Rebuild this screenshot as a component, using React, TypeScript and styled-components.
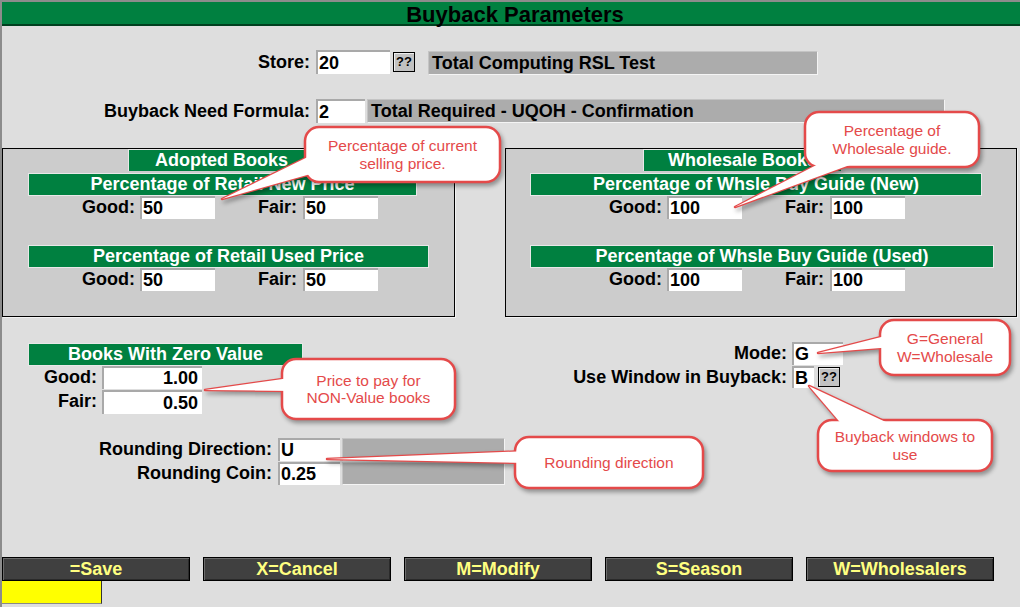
import styled, { createGlobalStyle } from "styled-components";

const FONT = `"Liberation Sans", Arial, sans-serif`;
const GREEN = "#008040";
const RED = "#e44a4a";

const GlobalStyle = createGlobalStyle`
  * { box-sizing: border-box; }
  body {
    margin: 0;
    background: #dedede;
    font-family: ${FONT};
  }
`;

const Window = styled.div`
  position: relative;
  width: 1020px;
  height: 607px;
  display: flex;
  flex-direction: column;
  background: #dedede;
  border-left: 2px solid #8c8c8c;
  border-top: 2px solid #8c8c8c;
  overflow: hidden;
`;

const TitleBar = styled.div`
  height: 24px;
  background: ${GREEN};
  border-bottom: 2px solid #00401f;
  color: #000;
  font: bold 22px/26px ${FONT};
  text-align: center;
  padding-left: 8px;
`;

const FieldRow = styled.div<{ $mt: number }>`
  display: flex;
  align-items: flex-start;
  margin-top: ${(p) => p.$mt}px;
`;

const Label = styled.div<{ $w: number; $lh?: number }>`
  width: ${(p) => p.$w}px;
  flex: none;
  text-align: right;
  font: bold 18px/${(p) => p.$lh ?? 23}px ${FONT};
  color: #000;
  white-space: nowrap;
`;

const Field = styled.div<{ $w: number; $h?: number; $ml?: number; $right?: boolean }>`
  width: ${(p) => p.$w}px;
  height: ${(p) => p.$h ?? 23}px;
  margin-left: ${(p) => p.$ml ?? 5}px;
  flex: none;
  background: #fff;
  border-top: 2px solid #a9a9a9;
  border-left: 2px solid #a9a9a9;
  padding: 0 4px 0 1px;
  font: bold 18px/${(p) => (p.$h ?? 23) - 2}px ${FONT};
  color: #000;
  text-align: ${(p) => (p.$right ? "right" : "left")};
  white-space: nowrap;
`;

const HelpButton = styled.div<{ $ml: number; $mt: number }>`
  width: 22px;
  height: 20px;
  margin-left: ${(p) => p.$ml}px;
  margin-top: ${(p) => p.$mt}px;
  flex: none;
  background: #c2c2c2;
  border: 1px solid #000;
  box-shadow: inset 1px 1px 0 #eee;
  font: bold 13px/18px ${FONT};
  text-align: center;
  color: #000;
`;

const DisplayBox = styled.div<{ $w: number; $h?: number; $ml: number; $mt?: number }>`
  width: ${(p) => p.$w}px;
  height: ${(p) => p.$h ?? 24}px;
  margin-left: ${(p) => p.$ml}px;
  margin-top: ${(p) => p.$mt ?? 0}px;
  flex: none;
  background: #acacac;
  border: 1px solid #f4f4f4;
  border-top-color: #c4c4c4;
  border-left-color: #c4c4c4;
  padding-left: 3px;
  font: bold 18px/22px ${FONT};
  color: #000;
  white-space: nowrap;
`;

const PanelRow = styled.div`
  display: flex;
  gap: 50px;
  margin-top: 25px;
`;

const Panel = styled.div<{ $w: number }>`
  width: ${(p) => p.$w}px;
  height: 169px;
  background: #cccccc;
  border: 1px solid #000;
  box-shadow: 1px 1px 0 #f2f2f2;
  display: flex;
  flex-direction: column;
  align-items: flex-start;
`;

const Tab = styled.div<{ $ml: number; $w: number }>`
  margin-left: ${(p) => p.$ml}px;
  width: ${(p) => p.$w}px;
  height: 22px;
  background: ${GREEN};
  border-top: 1px solid #e8e8e8;
  border-left: 1px solid #e8e8e8;
  color: #fff;
  font: bold 18px/21px ${FONT};
  text-align: center;
  white-space: nowrap;
`;

const GroupHeader = styled.div<{ $ml: number; $w: number; $mt: number }>`
  margin-left: ${(p) => p.$ml}px;
  margin-top: ${(p) => p.$mt}px;
  width: ${(p) => p.$w}px;
  height: 23px;
  background: ${GREEN};
  border: 1px solid #e8e8e8;
  color: #fff;
  font: bold 18px/21px ${FONT};
  text-align: center;
  white-space: nowrap;
`;

const PairRow = styled.div`
  display: flex;
  height: 23px;
`;

const LowerArea = styled.div`
  display: flex;
  margin-top: 25px;
`;

const LeftCol = styled.div`
  width: 503px;
  display: flex;
  flex-direction: column;
  align-items: flex-start;
`;

const RightCol = styled.div`
  flex: 1;
  display: flex;
  flex-direction: column;
`;

const StackRow = styled.div<{ $mt?: number }>`
  display: flex;
  align-items: flex-start;
  margin-top: ${(p) => p.$mt ?? 0}px;
`;

const ButtonBar = styled.div`
  margin-top: auto;
  display: flex;
  gap: 13px;
`;

const KeyButton = styled.div`
  width: 188px;
  height: 24px;
  background: #404040;
  border: 1px solid #000;
  box-shadow: inset 1px 1px 0 #6c6c6c, inset -1px -1px 0 #2a2a2a;
  color: #ffff80;
  font: bold 18px/22px ${FONT};
  text-align: center;
  white-space: nowrap;
`;

const StatusBox = styled.div`
  width: 100px;
  height: 23px;
  margin-bottom: 3px;
  background: #ffff00;
  border-right: 1px solid #333;
  border-bottom: 1px solid #888;
`;

const CalloutLayer = styled.div`
  position: absolute;
  left: -2px;
  top: -2px;
  width: 1020px;
  height: 607px;
  pointer-events: none;
`;

const CalloutShapes = styled.svg`
  position: absolute;
  inset: 0;
  filter: drop-shadow(2px 3px 2px rgba(0, 0, 0, 0.35));
`;

const CalloutText = styled.div<{ $x: number; $y: number; $w: number; $h: number }>`
  position: absolute;
  left: ${(p) => p.$x}px;
  top: ${(p) => p.$y}px;
  width: ${(p) => p.$w}px;
  height: ${(p) => p.$h}px;
  display: flex;
  align-items: center;
  justify-content: center;
  text-align: center;
  color: ${RED};
  font: 15.5px/17.5px ${FONT};
`;

type Pt = [number, number];
type Note = { x: number; y: number; w: number; h: number; tip: Pt; base: [Pt, Pt]; lines: string[] };

const notes: Note[] = [
  { x: 305, y: 127, w: 195, h: 55, tip: [222, 199], base: [[318, 152], [332, 168]], lines: ["Percentage of current", "selling price."] },
  { x: 805, y: 112, w: 174, h: 55, tip: [735, 207], base: [[830, 158], [858, 162]], lines: ["Percentage of", "Wholesale guide."] },
  { x: 880, y: 320, w: 130, h: 55, tip: [818, 353], base: [[893, 334], [893, 347]], lines: ["G=General", "W=Wholesale"] },
  { x: 818, y: 420, w: 174, h: 51, tip: [809, 386], base: [[850, 434], [905, 431]], lines: ["Buyback windows to", "use"] },
  { x: 282, y: 359, w: 173, h: 60, tip: [205, 390], base: [[297, 377], [297, 391]], lines: ["Price to pay for", "NON-Value books"] },
  { x: 515, y: 437, w: 188, h: 51, tip: [327, 459], base: [[529, 451], [529, 463]], lines: ["Rounding direction"] },
];

const Callouts = () => (
  <CalloutLayer>
    <CalloutShapes width={1020} height={607}>
      {notes.map((n, i) => {
        const tail = `${n.base[0].join(",")} ${n.tip.join(",")} ${n.base[1].join(",")}`;
        return (
          <g key={i}>
            <polygon points={tail} fill="#fff" stroke={RED} strokeWidth={2.5} strokeLinejoin="round" />
            <rect x={n.x} y={n.y} width={n.w} height={n.h} rx={14} fill="#fff" stroke={RED} strokeWidth={2.5} />
            <polygon points={tail} fill="#fff" />
          </g>
        );
      })}
    </CalloutShapes>
    {notes.map((n, i) => (
      <CalloutText key={i} $x={n.x} $y={n.y} $w={n.w} $h={n.h}>
        <div>
          {n.lines.map((l, j) => (
            <div key={j}>{l}</div>
          ))}
        </div>
      </CalloutText>
    ))}
  </CalloutLayer>
);

const PairFields = ({ w1, w2, good, fair }: { w1: number; w2: number; good: string; fair: string }) => (
  <PairRow>
    <Label $w={w1}>Good:</Label>
    <Field $w={75}>{good}</Field>
    <Label $w={w2}>Fair:</Label>
    <Field $w={75} $ml={6}>{fair}</Field>
  </PairRow>
);

const App = () => {
  return (
    <>
      <GlobalStyle />
      <Window>
        <TitleBar>Buyback Parameters</TitleBar>

        <FieldRow $mt={24}>
          <Label $w={308} $lh={24}>Store:</Label>
          <Field $w={74} $h={24} $ml={6}>20</Field>
          <HelpButton $ml={3} $mt={2}>??</HelpButton>
          <DisplayBox $w={390} $ml={13} $mt={1}>Total Computing RSL Test</DisplayBox>
        </FieldRow>

        <FieldRow $mt={24}>
          <Label $w={308} $lh={24}>Buyback Need Formula:</Label>
          <Field $w={49} $h={24} $ml={6}>2</Field>
          <DisplayBox $w={578} $ml={2}>Total Required - UQOH - Confirmation</DisplayBox>
        </FieldRow>

        <PanelRow>
          <Panel $w={453}>
            <Tab $ml={125} $w={186}>Adopted Books</Tab>
            <GroupHeader $ml={25} $mt={2} $w={389}>Percentage of Retail New Price</GroupHeader>
            <PairFields w1={132} w2={82} good="50" fair="50" />
            <GroupHeader $ml={25} $mt={26} $w={401}>Percentage of Retail Used Price</GroupHeader>
            <PairFields w1={132} w2={82} good="50" fair="50" />
          </Panel>
          <Panel $w={512}>
            <Tab $ml={137} $w={198}>Wholesale Books</Tab>
            <GroupHeader $ml={24} $mt={2} $w={452}>Percentage of Whsle Buy Guide (New)</GroupHeader>
            <PairFields w1={156} w2={82} good="100" fair="100" />
            <GroupHeader $ml={24} $mt={26} $w={464}>Percentage of Whsle Buy Guide (Used)</GroupHeader>
            <PairFields w1={156} w2={82} good="100" fair="100" />
          </Panel>
        </PanelRow>

        <LowerArea>
          <LeftCol>
            <GroupHeader $ml={26} $mt={1} $w={275}>Books With Zero Value</GroupHeader>
            <StackRow>
              <Label $w={95}>Good:</Label>
              <Field $w={100} $right>1.00</Field>
            </StackRow>
            <StackRow $mt={1}>
              <Label $w={95}>Fair:</Label>
              <Field $w={100} $h={24} $right>0.50</Field>
            </StackRow>
            <StackRow $mt={24}>
              <Label $w={270}>Rounding Direction:</Label>
              <Field $w={62} $ml={6}>U</Field>
              <DisplayBox $w={163} $h={23} $ml={2}></DisplayBox>
            </StackRow>
            <StackRow $mt={1}>
              <Label $w={270}>Rounding Coin:</Label>
              <Field $w={62} $ml={6}>0.25</Field>
              <DisplayBox $w={163} $h={23} $ml={2}></DisplayBox>
            </StackRow>
          </LeftCol>
          <RightCol>
            <StackRow>
              <Label $w={282}>Mode:</Label>
              <Field $w={51}>G</Field>
            </StackRow>
            <StackRow $mt={1}>
              <Label $w={282}>Use Window in Buyback:</Label>
              <Field $w={22} $h={22}>B</Field>
              <HelpButton $ml={4} $mt={1}>??</HelpButton>
            </StackRow>
          </RightCol>
        </LowerArea>

        <ButtonBar>
          <KeyButton>=Save</KeyButton>
          <KeyButton>X=Cancel</KeyButton>
          <KeyButton>M=Modify</KeyButton>
          <KeyButton>S=Season</KeyButton>
          <KeyButton>W=Wholesalers</KeyButton>
        </ButtonBar>
        <StatusBox />

        <Callouts />
      </Window>
    </>
  );
};

export default App;
